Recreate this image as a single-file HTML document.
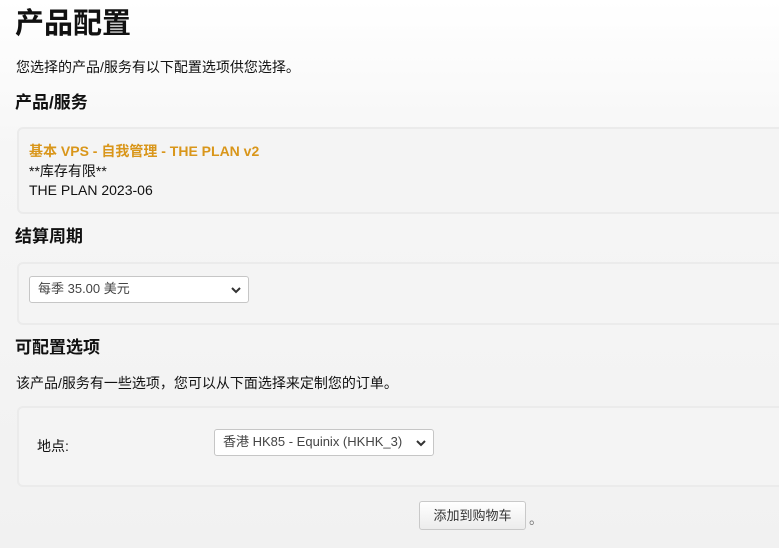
<!DOCTYPE html>
<html><head><meta charset="utf-8"><style>
html,body{margin:0;padding:0}
body{width:779px;height:548px;overflow:hidden;background:linear-gradient(#ffffff 0px,#f6f6f6 150px,#f1f1f1 548px);font-family:"Liberation Sans","Noto Sans CJK SC",sans-serif;color:#111;position:relative}
.a{position:absolute;white-space:nowrap;line-height:18px}
h1{position:absolute;left:15px;top:0px;margin:0;font-size:29px;font-weight:bold;color:#111}
.h{font-size:17px;font-weight:bold;line-height:22px}
.t{font-size:14px}
.p{position:absolute;left:17px;right:-10px;background:#f4f4f4;border:2px solid #ebebeb;border-radius:6px}
.sel{position:absolute;background:#fff;border:1px solid #c6c6c6;border-radius:3px;font-size:13px;color:#444;box-sizing:border-box}
.sel span{position:absolute;left:8px;top:4px;line-height:16px}
.sel svg{position:absolute;right:7px;top:9px}
.btn{position:absolute;left:419px;top:501px;width:107px;height:29px;box-sizing:border-box;border:1px solid #c9c9c9;border-radius:3px;background:linear-gradient(#fff,#ececec);font-size:13px;color:#333;text-align:center;line-height:27px}
</style></head><body>
<h1>产品配置</h1>
<div class="a t" style="left:16px;top:58px">您选择的产品/服务有以下配置选项供您选择。</div>
<div class="a h" style="left:15px;top:92px">产品/服务</div>
<div class="p" style="top:127px;height:83px"></div>
<div class="a t" style="left:29px;top:142px;color:#d9961a;font-weight:bold">基本 VPS - 自我管理 - THE PLAN v2</div>
<div class="a t" style="left:29px;top:162px">**库存有限**</div>
<div class="a t" style="left:29px;top:181px">THE PLAN 2023-06</div>
<div class="a h" style="left:15px;top:226px">结算周期</div>
<div class="p" style="top:262px;height:59px"></div>
<div class="sel" style="left:29px;top:276px;width:220px;height:27px"><span>每季 35.00 美元</span><svg width="10" height="8" viewBox="0 0 10 8"><path d="M1 2l4 4 4-4" stroke="#333" stroke-width="2" fill="none"/></svg></div>
<div class="a h" style="left:15px;top:337px">可配置选项</div>
<div class="a t" style="left:16px;top:374px">该产品/服务有一些选项，您可以从下面选择来定制您的订单。</div>
<div class="p" style="top:406px;height:77px"></div>
<div class="a t" style="left:37px;top:437px">地点:</div>
<div class="sel" style="left:214px;top:429px;width:220px;height:27px"><span>香港 HK85 - Equinix (HKHK_3)</span><svg width="10" height="8" viewBox="0 0 10 8"><path d="M1 2l4 4 4-4" stroke="#333" stroke-width="2" fill="none"/></svg></div>
<div class="btn">添加到购物车</div>
<div class="a t" style="left:529px;top:510px;color:#777">。</div>
</body></html>
